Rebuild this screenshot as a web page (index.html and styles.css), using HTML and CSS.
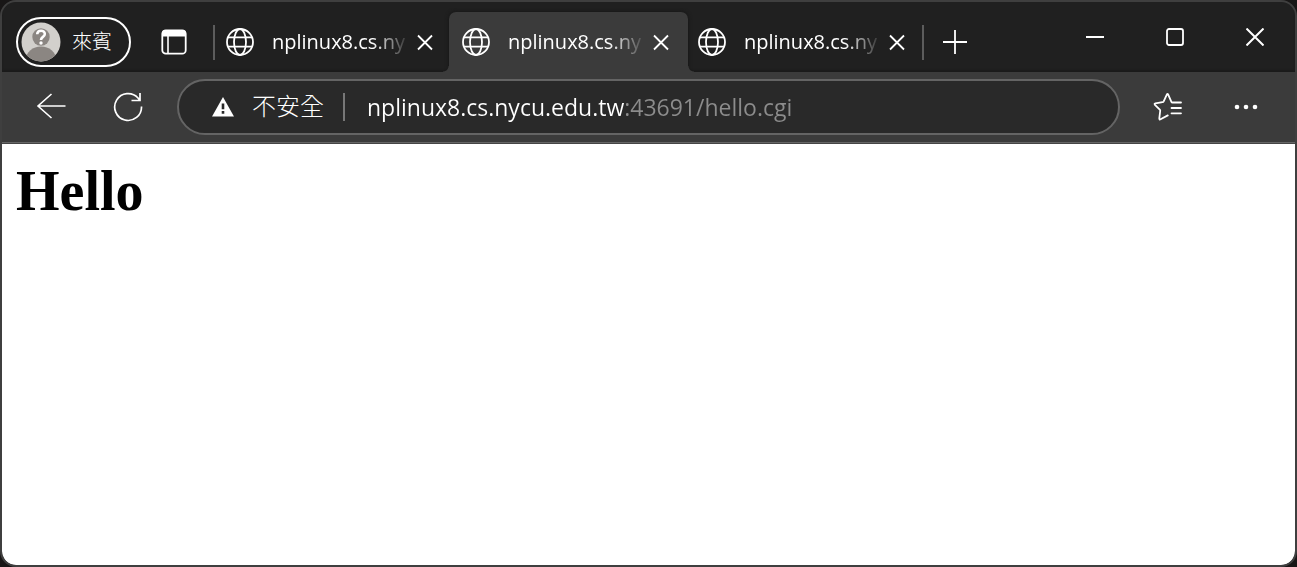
FILE: index.html
```html
<!DOCTYPE html>
<html lang="zh-Hant">
<head>
<meta charset="utf-8">
<title>nplinux8.cs.nycu.edu.tw:43691/hello.cgi</title>
<link rel="stylesheet" href="styles.css">
</head>
<body>
<svg width="0" height="0" class="defs" aria-hidden="true">
  <symbol id="globe" viewBox="0 0 28 28">
    <g fill="none" stroke="currentColor" stroke-width="1.8">
      <circle cx="14" cy="14" r="13"/>
      <ellipse cx="14" cy="14" rx="6" ry="13"/>
      <path d="M2 9.3H26M2 18.7H26"/>
    </g>
  </symbol>
  <symbol id="cross" viewBox="0 0 18 18">
    <path d="M2 2.500L16 16.500M16 2.500L2 16.500" fill="none" stroke="currentColor" stroke-width="1.8"/>
  </symbol>
</svg>
<div class="window">
  <header class="titlebar">
    <div class="strip">
      <button class="profile">
        <svg class="avatar" viewBox="0 0 40 40" aria-hidden="true">
          <clipPath id="round"><circle cx="20" cy="20" r="19.5"/></clipPath>
          <circle cx="20" cy="20" r="19.5" fill="#d2d0cc"/>
          <g clip-path="url(#round)" fill="#8b8682"><ellipse cx="20" cy="37" rx="15" ry="12.5"/></g>
          <circle cx="20" cy="15" r="8.7" fill="#8b8682"/>
          <path d="M16.2 12.3C16.4 7.6 23.8 7.6 23.8 12C23.8 15 20 14.8 20 18" fill="none" stroke="#fff" stroke-width="2.6"/>
          <circle cx="20" cy="21" r="1.7" fill="#fff"/>
        </svg>
        <span>來賓</span>
      </button>
      <button class="workspace" aria-label="Tab actions">
        <svg width="26" height="26" viewBox="0 0 26 26">
          <rect x="1.3" y="1.3" width="23.4" height="23.4" rx="3.5" fill="none" stroke="currentColor" stroke-width="1.8"/>
          <path d="M1 7.5V4a3 3 0 0 1 3-3H22a3 3 0 0 1 3 3V7.5Z" fill="currentColor"/>
          <path d="M7 7V24.5" stroke="currentColor" stroke-width="1.6"/>
        </svg>
      </button>
      <div class="tabs" role="tablist">
        <div class="tab first" role="tab">
          <svg class="globe"><use href="#globe"/></svg>
          <span class="label">nplinux8.cs.ny</span>
          <button class="close" aria-label="Close tab"><svg class="cross"><use href="#cross"/></svg></button>
        </div>
        <div class="tab active" role="tab" aria-selected="true">
          <svg class="globe"><use href="#globe"/></svg>
          <span class="label">nplinux8.cs.ny</span>
          <button class="close" aria-label="Close tab"><svg class="cross"><use href="#cross"/></svg></button>
        </div>
        <div class="tab last" role="tab">
          <svg class="globe"><use href="#globe"/></svg>
          <span class="label">nplinux8.cs.ny</span>
          <button class="close" aria-label="Close tab"><svg class="cross"><use href="#cross"/></svg></button>
        </div>
      </div>
      <button class="new-tab" aria-label="New tab">
        <svg width="26" height="26" viewBox="0 0 26 26"><path d="M13 1V25M1 13H25" stroke="currentColor" stroke-width="1.8"/></svg>
      </button>
    </div>
    <div class="controls">
      <button aria-label="Minimize"><svg width="18" height="18" viewBox="0 0 18 18"><path d="M0 9H18" stroke="currentColor" stroke-width="2"/></svg></button>
      <button aria-label="Maximize"><svg width="18" height="18" viewBox="0 0 18 18"><rect x="1" y="1" width="16" height="16" rx="2" fill="none" stroke="currentColor" stroke-width="1.800"/></svg></button>
      <button aria-label="Close"><svg width="18" height="18" viewBox="0 0 18 18"><path d="M.5 .5L17.5 17.5M17.5 .5L.5 17.5" stroke="currentColor" stroke-width="2"/></svg></button>
    </div>
  </header>
  <nav class="toolbar">
    <button aria-label="Back">
      <svg width="30" height="30" viewBox="0 0 30 30"><path d="M15.500 2L2 14L15.500 26M2 14H29.500" fill="none" stroke="currentColor" stroke-width="1.6"/></svg>
    </button>
    <button aria-label="Refresh">
      <svg width="30" height="30" viewBox="0 0 30 30"><path d="M28.500 14.500A13.400 13.400 0 1 1 25 6L27 8.500M27 1V8.500H18.500" fill="none" stroke="currentColor" stroke-width="1.7"/></svg>
    </button>
    <div class="address">
      <button class="security">
        <svg width="22" height="20" viewBox="0 0 22 20"><path d="M11 0L22 19.500H0Z" fill="currentColor"/><path d="M11 6.500V12.300M11 14V16.800" stroke="#292929" stroke-width="2.600"/></svg>
        <span>不安全</span>
      </button>
      <input class="url" type="text" aria-label="Address" value="nplinux8.cs.nycu.edu.tw:43691/hello.cgi" spellcheck="false">
    </div>
    <div class="actions">
      <button aria-label="Favorites">
        <svg width="30" height="30" viewBox="0 0 30 30"><g fill="none" stroke="currentColor" stroke-width="1.8" stroke-linecap="round" stroke-linejoin="round"><path d="M28 10.500H19.500Q18.700 10.500 18.400 9.800L15.200 2.700Q14.500 1.300 13.800 2.700L10.700 9.300Q10.300 10.100 9.500 10.200L2.400 11.300Q1 11.700 1.900 12.800L6.800 17.600Q7.400 18.200 7.200 19L6.300 26.400Q6.200 28 7.600 27.300L14.800 23.400"/><path d="M18.500 16H28M18.500 21.300H28"/></g></svg>
      </button>
      <button aria-label="Settings and more">
        <svg width="24" height="6" viewBox="0 0 24 6" fill="currentColor"><circle cx="3" cy="3" r="2.300"/><circle cx="12" cy="3" r="2.300"/><circle cx="21" cy="3" r="2.300"/></svg>
      </button>
    </div>
  </nav>
  <main class="page"><h1>Hello</h1></main>
</div>
</body>
</html>
```
FILE: styles.css
```css
* { box-sizing: border-box; }

body {
  margin: 0;
  background: #181616;
  font-family: "Open Sans", "Noto Sans CJK TC", sans-serif;
  color: #fff;
}

button {
  display: flex;
  align-items: center;
  justify-content: center;
  padding: 0;
  border: 0;
  background: none;
  color: inherit;
  font: inherit;
}

.defs { position: absolute; }

.window {
  display: flex;
  flex-direction: column;
  min-height: 100vh;
  border: 2px solid #3f3f3f;
  border-radius: 16px;
  overflow: hidden;
  background: #3b3b3b;
}

.titlebar {
  display: flex;
  align-items: flex-end;
  justify-content: space-between;
  height: 70px;
  background: #202020;
  box-shadow: inset 0 -2px 2px #1b1b1b;
}

.strip {
  display: flex;
  align-items: center;
  height: 60px;
  padding-left: 14px;
}

.profile {
  gap: 11px;
  width: 115px;
  height: 50px;
  padding-right: 14px;
  border: 2px solid #fff;
  border-radius: 25px;
  font: 300 20px/24px "Noto Sans CJK TC", sans-serif;
  white-space: nowrap;
}

.profile span { padding-bottom: 3px; }

.avatar { width: 40px; height: 40px; }

.workspace { width: 82px; height: 60px; padding-left: 4px; }

.tabs { display: flex; height: 60px; }

.tab {
  position: relative;
  display: flex;
  align-items: center;
  width: 236px;
  padding-left: 13px;
}

.first::before,
.last::after {
  content: "";
  position: absolute;
  top: 13px;
  width: 2px;
  height: 35px;
  background: #5c5c5c;
}

.first::before { left: 0; }
.last::after { right: -3px; }

.active {
  z-index: 1;
  width: 239px;
  margin-right: -3px;
  padding-right: 3px;
  border-radius: 7px 7px 0 0;
  background: #3b3b3b;
  box-shadow: 0 0 4px #141414;
  clip-path: inset(-4px -8px 0 -8px);
}

.active::before,
.active::after {
  content: "";
  position: absolute;
  bottom: 0;
  width: 6px;
  height: 6px;
}

.active::before {
  right: 100%;
  background: radial-gradient(circle at 0 0, transparent 5px, #3b3b3b 6px);
}

.active::after {
  left: 100%;
  background: radial-gradient(circle at 100% 0, transparent 5px, #3b3b3b 6px);
}

.globe { width: 28px; height: 28px; flex: none; }

.label {
  flex: 1;
  min-width: 0;
  margin-left: 18px;
  font-size: 20px;
  line-height: 32px;
  white-space: nowrap;
  mask-image: linear-gradient(90deg, #000 100px, transparent 138px);
}

.close { width: 40px; height: 60px; margin-right: 4px; }

.cross { width: 18px; height: 18px; }

.new-tab { width: 67px; height: 58px; }

.controls { display: flex; height: 70px; }

.controls button { width: 80px; height: 70px; }

.toolbar {
  display: flex;
  align-items: center;
  height: 72px;
  padding: 0 10px 2px 10px;
  background: #3b3b3b;
  box-shadow: inset 0 -1px #454545, inset 0 -2px #666;
}

.toolbar > button { width: 77px; height: 56px; }

.address {
  display: flex;
  align-items: center;
  flex: 1;
  height: 56px;
  margin: 0 9px 0 11px;
  padding: 0 32px 0 33px;
  border: 2px solid #646464;
  border-radius: 28px;
  background: #292929;
}

.security {
  gap: 18px;
  height: 28px;
  padding-right: 19px;
  border-right: 2px solid #777;
  font: 300 24px/28px "Noto Sans CJK TC", sans-serif;
  white-space: nowrap;
}

.security span { padding-bottom: 4px; }

.url {
  flex: 1;
  min-width: 0;
  height: 40px;
  margin-left: 22px;
  padding: 0;
  border: 0;
  outline: 0;
  background: linear-gradient(90deg, #fff 257px, #8c8c8c 257px);
  background-clip: text;
  color: transparent;
  font: 23px "Open Sans", sans-serif;
}

.actions { display: flex; }

.actions button { width: 78px; height: 56px; }

.page {
  flex: 1;
  padding: 15px 14px;
  border-radius: 0 0 14px 14px;
  background: #fff;
  color: #000;
  font-family: "Liberation Serif", serif;
}

h1 {
  margin: 0;
  font-size: 56px;
  line-height: 64px;
}
```
